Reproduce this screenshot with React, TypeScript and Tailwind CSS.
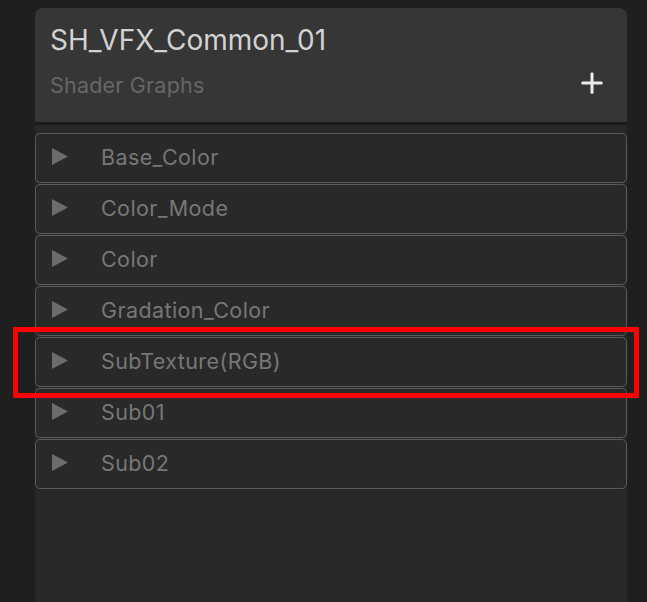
import { Plus } from 'lucide-react';

const items = ['Base_Color', 'Color_Mode', 'Color', 'Gradation_Color', 'SubTexture(RGB)', 'Sub01', 'Sub02'];

function Row({ label }: { label: string }) {
  return (
    <div className="flex h-[50px] items-center rounded-[5px] border border-[#5a5a5a] bg-[#292929]">
      <svg width="17" height="18" viewBox="0 0 17 18" className="ml-[16px] -mt-[3px]">
        <path d="M0 0 L16 8.5 L0 17 Z" fill="#6c6c6c" />
      </svg>
      <span className="ml-[32px] text-[21.5px] leading-none tracking-[0.4px] text-[#777777]">{label}</span>
    </div>
  );
}

export default function App() {
  return (
    <div
      className="relative h-[602px] w-[647px] overflow-hidden bg-[#1f1f1f] pt-[8px] pl-[35px]"
      style={{ fontFamily: 'Inter, "Noto Sans", sans-serif' }}
    >
      <div className="flex h-full w-[592px] flex-col">
        {/* Header */}
        <div className="flex h-[114px] flex-col rounded-t-[8px] bg-[#363636] px-[15px] pt-[18px]">
          <div className="text-[28px] leading-none text-[#d2d2d2]">SH_VFX_Common_01</div>
          <div className="mt-[21px] flex items-start justify-between">
            <span className="text-[21.5px] leading-none tracking-[0.2px] text-[#676767]">Shader Graphs</span>
            <Plus size={32} strokeWidth={2.25} className="mr-[4px] -mt-[8px] text-[#ececec]" />
          </div>
        </div>
        <div className="h-[3px] bg-[#1b1b1b]" />
        {/* List */}
        <div className="flex flex-1 flex-col gap-[1px] bg-[#282828] pt-[8px]">
          {items.map(item => (
            <Row key={item} label={item} />
          ))}
        </div>
      </div>

      {/* Highlight annotation */}
      <div className="absolute left-[13px] top-[327px] h-[71px] w-[626px] border-[5px] border-[#ff0000]" />
    </div>
  );
}
